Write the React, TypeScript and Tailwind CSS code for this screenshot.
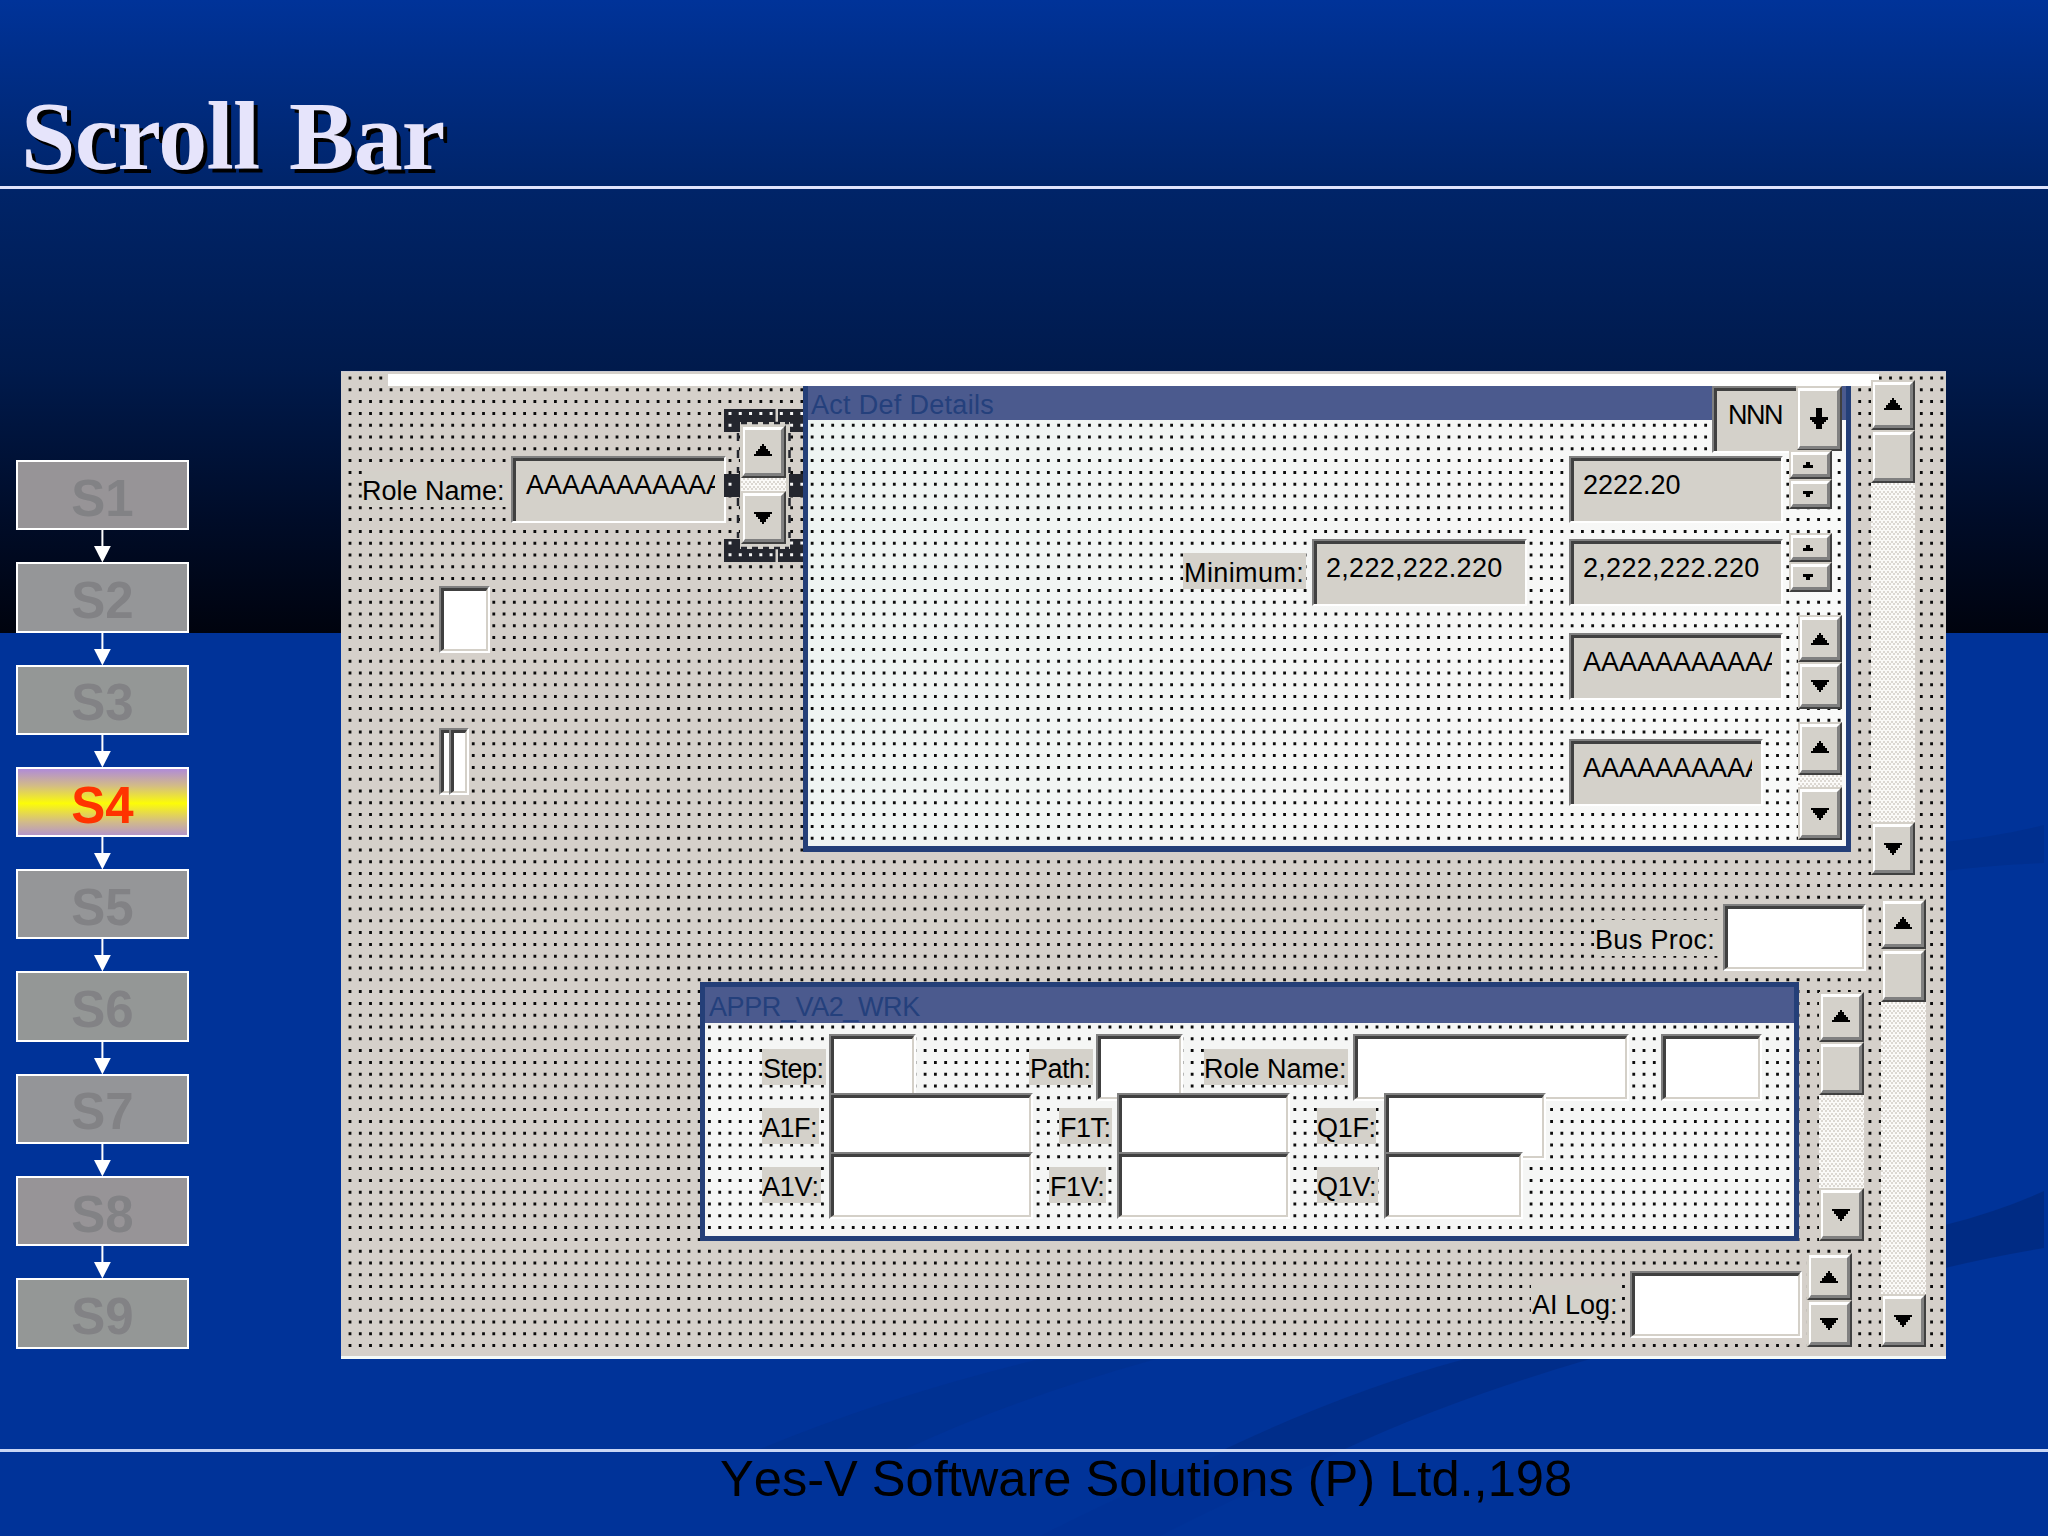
import { ReactNode } from "react";
import clsx from "clsx";

const steps = [
  { name: "S1", fill: "bg-[#979497]" },
  { name: "S2", fill: "bg-[#959698]" },
  { name: "S3", fill: "bg-[#949796]" },
  { name: "S4", fill: "bg-[linear-gradient(#b08bd8,#d2bb88_25%,#fcfc08_52%,#d2bb88_80%,#b596c8)]", active: true },
  { name: "S5", fill: "bg-[#959698]" },
  { name: "S6", fill: "bg-[#949796]" },
  { name: "S7", fill: "bg-[#949598]" },
  { name: "S8", fill: "bg-[#979497]" },
  { name: "S9", fill: "bg-[#949796]" },
];

function StepArrow() {
  return (
    <svg className="h-8 w-[18px] shrink-0" viewBox="0.6 0 18 32">
      <path d="M9 0V18" stroke="#fff" strokeWidth="2" />
      <path d="M0.6 16H17.4L9 32.5Z" fill="#fff" />
    </svg>
  );
}

function StepList() {
  return (
    <nav className="mt-[271px] ml-4 flex w-[173px] shrink-0 flex-col items-center">
      {steps.map((step, i) => (
        <div key={step.name} className="flex w-full flex-col items-center">
          <div
            className={clsx(
              "flex h-[70.3px] w-full items-center justify-center border-2 border-white pt-1.5 text-[51px] leading-none font-bold",
              step.fill,
              step.active ? "text-[#ff3300]" : "text-[#828285]"
            )}
          >
            {step.name}
          </div>
          {i < steps.length - 1 && <StepArrow />}
        </div>
      ))}
    </nav>
  );
}

// Grid of the form designer: one dashed line per row of dots.
// The view box picks the part of the grid, so nested frames stay in phase with it.
function DotGrid({ viewBox }: { viewBox: string }) {
  return (
    <svg className="absolute inset-0 h-full w-full" viewBox={viewBox} preserveAspectRatio="none">
      {Array.from({ length: 83 }, (_, row) => (
        <path
          key={row}
          d={`M7.6 ${(7 + row * 11.8).toFixed(1)}H1604`}
          stroke="#0c0c0c"
          strokeWidth="3"
          strokeDasharray="2.8 7.47"
        />
      ))}
    </svg>
  );
}

function Label({ className, children }: { className: string; children: ReactNode }) {
  return (
    <div className={clsx("h-9 shrink-0 bg-[#d4d1ca] pt-[7px] text-[27px] leading-none whitespace-nowrap", className)}>
      {children}
    </div>
  );
}

function Field({ className, children }: { className: string; children?: ReactNode }) {
  return (
    <div className={clsx("h-[67px] shrink-0 border-t-[2.5px] border-r-2 border-b-[2.5px] border-l-2 border-t-[#808080] border-r-white border-b-white border-l-[#808080]", className)}>
      <div
        className={clsx(
          "h-full border-t-[3px] border-l-[3px] border-t-[#404040] border-l-[#404040]",
          children ? "bg-[#d4d1ca] pr-[9px]" : "border-r-2 border-b-2 border-r-[#d4d0c8] border-b-[#d4d0c8] bg-white"
        )}
      >
        <div className="overflow-hidden pt-[10px] pl-[9px] text-[27px] leading-[28px] whitespace-nowrap">{children}</div>
      </div>
    </div>
  );
}

function ArrowIcon({ kind, className }: { kind: string; className?: string }) {
  if (kind === "drop") {
    return (
      <svg className="h-[21px] w-[18px]" viewBox="0 0 9 9" preserveAspectRatio="none" shapeRendering="crispEdges">
        <path d="M3 0h3v4h3v1h-1v1h-1v1h-1v2h-3v-2h-1v-1h-1v-1h-1v-1h3z" />
      </svg>
    );
  }
  return (
    <svg
      className={clsx("h-3 w-[18px]", kind === "down" && "rotate-180", className)}
      viewBox="0 0 9 5"
      preserveAspectRatio="none"
      shapeRendering="crispEdges"
    >
      <path d="M4 0h1v1h1v1h1v1h1v1h1v1h-9v-1h1v-1h1v-1h1v-1h1z" />
    </svg>
  );
}

function SmallArrow({ down }: { down?: boolean }) {
  return (
    <svg className={clsx("mr-1 h-[6px] w-[10px]", down && "rotate-180")} viewBox="0 0 10 6" shapeRendering="crispEdges">
      <path d="M3 0h4v3h3v3h-10v-3h3z" />
    </svg>
  );
}

function Button({ className, children }: { className: string; children?: ReactNode }) {
  return (
    <div className={clsx("w-full shrink-0 border-t-2 border-r-2 border-b-[2.5px] border-l-2 border-t-[#d4d0c8] border-r-[#404040] border-b-[#404040] border-l-[#d4d0c8]", className)}>
      <div className="flex h-full items-center justify-center border-t-[3px] border-r-[3px] border-b-[3px] border-l-2 border-t-white border-r-[#808080] border-b-[#808080] border-l-white bg-[#d4d1ca]">
        {children}
      </div>
    </div>
  );
}

function Track() {
  return <div className="grow bg-[conic-gradient(#dcd8d2_25%,#fbfaf8_0_50%,#dcd8d2_0_75%,#fbfaf8_0)] bg-[length:4px_5px]" />;
}

function ScrollBar({ className, thumb }: { className: string; thumb?: boolean }) {
  return (
    <div className={clsx("flex shrink-0 flex-col", className)}>
      <Button className={thumb ? "h-[50px]" : "h-[53px]"}>
        <ArrowIcon kind="up" className={thumb ? "mb-0.5" : "mb-1"} />
      </Button>
      {thumb && <Button className="h-[53px]" />}
      <Track />
      <Button className="h-[53px]">
        <ArrowIcon kind="down" />
      </Button>
    </div>
  );
}

function Spinner({ className }: { className: string }) {
  return (
    <div className={clsx("flex h-[94px] shrink-0 flex-col", className)}>
      <Button className="h-[47px]">
        <ArrowIcon kind="up" />
      </Button>
      <Button className="h-[47px]">
        <ArrowIcon kind="down" />
      </Button>
    </div>
  );
}

function SmallSpinner() {
  return (
    <div className="mr-[14px] ml-1.5 flex h-[59px] w-[43px] shrink-0 flex-col">
      <Button className="h-[29px]">
        <SmallArrow />
      </Button>
      <Button className="h-[30px]">
        <SmallArrow down />
      </Button>
    </div>
  );
}

// Selection handles round the first scroll bar
function Selection() {
  return (
    <svg className="absolute top-0 left-0 h-[154px] w-[79px]" viewBox="0 0 79 154">
      <path d="M16 12H66V142H16Z" fill="#d4d1ca" />
      <g fill="#24262e">
        <path d="M0 0H51.5V13H16V23H0Z" />
        <path d="M54 0H79V23H66V13H54Z" />
        <path d="M0 65H16V88H0Z" />
        <path d="M65 65H79V88H65Z" />
        <path d="M0 130H16V140H51.5V153H0Z" />
        <path d="M54 140H66V130H79V153H54Z" />
      </g>
      <path d="M14 24V64M65.5 24V64M14 89V129M65.5 89V129" stroke="#24262e" strokeWidth="2.5" strokeDasharray="8 9" />
      <path d="M17 14H65M17 139H65" stroke="#24262e" strokeWidth="2.5" strokeDasharray="6 5" />
      <g stroke="#f4f4f4" strokeWidth="3" strokeDasharray="3 7.27">
        <path d="M4.5 4.4H79M4.5 145.8H79" />
        <path d="M4.5 16.2H9M66.1 16.2H79M4.5 75.2H9M66.1 75.2H79M4.5 134H9M66.1 134H79" />
      </g>
    </svg>
  );
}

function ActDefDetails() {
  return (
    <div className="absolute top-[15px] left-[462px] h-[466px] w-[1048px] overflow-hidden border-x-[5px] border-b-[6px] border-[#243f78] bg-[linear-gradient(100deg,#eef4f2,#f6f6f5_60%,#f9faf9)]">
      <DotGrid viewBox="467 15 1038 460" />
      <h2 className="relative h-[34px] bg-[#4b5a8e] pt-1.5 pl-[3px] text-[27px] leading-none tracking-[0.3px] text-[#24407c]">
        Act Def Details
      </h2>
      <div className="relative -mt-[34px] flex h-[68px] items-start justify-end pr-[4px]">
        <Field className="w-[88px]">
          <span className="pl-0.5 tracking-[-1.5px]">NNN</span>
        </Field>
        <div className="-ml-1 w-[46px]">
          <Button className="h-[65px]">
            <ArrowIcon kind="drop" />
          </Button>
        </div>
      </div>
      <div className="relative -mt-1 flex h-[74px] items-start justify-end">
        <Field className="mt-1.5 w-[214px]">2222.20</Field>
        <SmallSpinner />
      </div>
      <div className="relative mt-[9px] flex h-[74px] items-start justify-end">
        <Label className="mt-5 w-[123px] pl-px tracking-[0.4px]">Minimum:</Label>
        <Field className="mt-1.5 ml-1.5 w-[215px]">
          <span className="tracking-[0.3px]">2,222,222.220</span>
        </Field>
        <Field className="mt-1.5 ml-[42px] w-[214px]">
          <span className="tracking-[0.3px]">2,222,222.220</span>
        </Field>
        <SmallSpinner />
      </div>
      <div className="relative mt-2 flex h-[94px] items-start justify-end pr-1">
        <Field className="mt-[18px] mr-[15px] w-[214px]">AAAAAAAAAAA</Field>
        <Spinner className="w-11" />
      </div>
      <div className="relative mt-[13px] flex h-[118px] items-start justify-end pr-1">
        <Field className="mt-[17px] mr-[35px] w-[194px]">AAAAAAAAAA</Field>
        <ScrollBar className="h-[118px] w-11" />
      </div>
    </div>
  );
}

function ApprWork() {
  return (
    <div className="absolute top-[611px] left-[359px] h-[259px] w-[1099px] overflow-hidden border-[5px] border-[#243f78] bg-[#f5f6f5]">
      <DotGrid viewBox="364 616 1089 249" />
      <h2 className="relative h-9 bg-[#4b5a8e] pt-[7px] pl-1 text-[27px] leading-none tracking-[-0.4px] text-[#24407c]">
        APPR_VA2_WRK
      </h2>
      <div className="relative mt-[11px] flex pl-[57px]">
        <Label className="mt-[15px] w-16 pl-px tracking-[-0.5px]">Step:</Label>
        <Field className="ml-[3px] w-[87px]" />
        <Label className="mt-[15px] ml-[113px] w-16 pl-px tracking-[-0.5px]">Path:</Label>
        <Field className="ml-[3px] w-[87px]" />
        <Label className="mt-[15px] ml-[21px] w-36">Role Name:</Label>
        <Field className="ml-[5px] w-[276px]" />
        <Field className="ml-8 w-[101px]" />
      </div>
      <div className="relative -mt-2 flex pl-[57px]">
        <Label className="mt-[15px] w-[57px] tracking-[-0.5px]">A1F:</Label>
        <Field className="ml-[10px] w-[204px]" />
        <Label className="mt-[15px] ml-[26px] w-[53px] pl-px tracking-[-0.5px]">F1T:</Label>
        <Field className="ml-[5px] w-[173px]" />
        <Label className="mt-[15px] ml-[27px] w-[59px] tracking-[-0.3px]">Q1F:</Label>
        <Field className="ml-2 w-[162px]" />
      </div>
      <div className="relative -mt-2 flex pl-[57px]">
        <Label className="mt-[15px] w-[59px] tracking-[-0.2px]">A1V:</Label>
        <Field className="ml-2 w-[204px]" />
        <Label className="mt-[15px] ml-4 w-[57px] pl-px tracking-[-0.4px]">F1V:</Label>
        <Field className="ml-[11px] w-[173px]" />
        <Label className="mt-[15px] ml-[27px] w-[61px] tracking-[-0.3px]">Q1V:</Label>
        <Field className="ml-1.5 w-[139px]" />
      </div>
    </div>
  );
}

function Designer() {
  return (
    <section className="relative mt-[182px] ml-[152px] h-[988px] w-[1605px] shrink-0 overflow-hidden bg-[#d5d0ca] text-black">
      <DotGrid viewBox="0 0 1605 988" />
      <div className="h-[988px] border-t border-b-[3px] border-t-[#c9c8d0] border-b-[#f4faf8] pt-[2px] pl-[47px]">
        <div className="relative h-3 w-[1491px] bg-white" />
      </div>

      <div className="absolute top-[85px] left-[21px] flex">
        <Label className="mt-[15px] w-[147px]">Role Name:</Label>
        <Field className="ml-[2px] w-[215px]">
          <span className="pl-px">AAAAAAAAAAA</span>
        </Field>
      </div>
      <Field className="absolute top-[215px] left-[98px] w-[51px]" />
      <div className="absolute top-[357px] left-[98px] flex">
        <Field className="w-[30px]" />
        <Field className="-ml-5 w-[20px]" />
      </div>
      <div className="absolute top-[38px] left-[383px] pt-4 pl-[17px]">
        <Selection />
        <ScrollBar className="relative h-[119px] w-[45px]" />
      </div>

      <ActDefDetails />
      <ScrollBar className="absolute top-[9px] left-[1530px] h-[495px] w-11" thumb />

      <div className="absolute top-[528px] left-[1253px] flex">
        <Label className="mt-[21px] w-[128px] pl-px tracking-[0.35px]">Bus Proc:</Label>
        <Field className="mt-[5px] ml-px w-[143px]" />
        <ScrollBar className="ml-[15px] h-[448px] w-[45px]" thumb />
      </div>

      <ApprWork />
      <ScrollBar className="absolute top-[621px] left-[1478px] h-[249px] w-[45px]" thumb />

      <div className="absolute top-[882px] left-[1190px] flex">
        <Label className="mt-8 w-[89px] pl-px">AI Log:</Label>
        <Field className="mt-[18px] ml-[10px] w-[172px]" />
        <Spinner className="ml-[5px] w-[45px]" />
      </div>
    </section>
  );
}

// Faint curved bands in the lower half of the slide
function Swooshes() {
  return (
    <svg className="absolute inset-0 h-full w-full" viewBox="0 0 2048 1536">
      <g fill="#002a80">
        <path d="M1945 842Q2000 836 2044 825V863Q1990 865 1945 871Z" opacity="0.4" />
        <path d="M1945 1225Q2000 1211 2044 1191V1248Q1990 1257 1945 1268Z" opacity="0.85" />
        <path d="M1465 1359H1590Q1450 1400 1345 1449H1225Q1350 1390 1465 1359Z" opacity="0.6" />
        <path d="M1040 1359H1156Q1010 1400 906 1449H760Q890 1395 1040 1359Z" opacity="0.25" />
        <path d="M1225 1452H1340Q1240 1495 1160 1536H1040Q1130 1490 1225 1452Z" opacity="0.12" />
      </g>
    </svg>
  );
}

export default function App() {
  return (
    <main className="relative flex h-[1536px] w-[2048px] flex-col overflow-hidden bg-[#003399] bg-[linear-gradient(#003399,#002468_191px,#001a4c_370px,#000c28_520px,#00030e_633px,#003399_633px)] font-['Liberation_Sans',Arial,sans-serif]">
      <Swooshes />
      <header className="relative h-[189px] shrink-0 border-b-[3px] border-[#dfe3fb] pt-[87px] pl-[21px]">
        <h1 className="font-['Liberation_Serif','Times_New_Roman',serif] text-[98px] leading-none font-bold tracking-[-0.8px] text-[#e6e4fb] [text-shadow:4px_4px_0_#000] [word-spacing:6px]">
          Scroll Bar
        </h1>
      </header>
      <div className="relative flex h-[1260px] shrink-0 items-start">
        <StepList />
        <Designer />
      </div>
      <footer className="relative grow border-t-[3px] border-[#c9d6f5] pt-[2px] pl-[720px] text-[50.6px] leading-none whitespace-nowrap text-black [font-kerning:none]">
        Yes-V Software Solutions (P) Ltd.,198
      </footer>
    </main>
  );
}
